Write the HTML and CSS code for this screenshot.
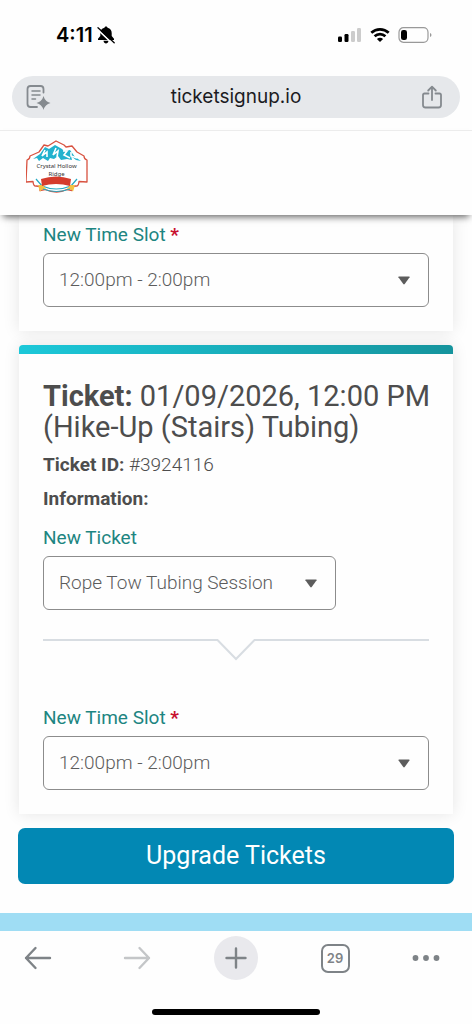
FILE: index.html
```html
<!DOCTYPE html>
<html lang="en">
<head>
<meta charset="utf-8">
<meta name="viewport" content="width=device-width, initial-scale=1">
<title>Upgrade Tickets</title>
<link rel="stylesheet" href="styles.css">
</head>
<body>
<div class="status-bar">
  <div class="status-left">
    <span class="clock">4:11</span>
    <svg width="18" height="18" viewBox="0 0 18 18" aria-hidden="true">
      <path d="M9 .5c-1 0-1.500.6-1.500 1.300C4.500 2.500 3.300 4.500 3.300 7v3L1 12.700v1.300h16v-1.300L14.700 10V7c0-2.500-1.200-4.500-4.200-5.200C10.500 1.100 10 .5 9 .5zM6.500 14.700h5C11.300 16.400 10.200 17.500 9 17.500s-2.300-1.100-2.500-2.800z" fill="#000"/>
      <path d="M0 2.900 15.700 17.900" stroke="#fff" stroke-width="1.500"/>
      <path d="M1 1.700 17.200 16.800" stroke="#000" stroke-width="1.300" stroke-linecap="round"/>
    </svg>
  </div>
  <div class="status-right">
    <svg width="25" height="16" viewBox="0 0 25 16" aria-hidden="true">
      <rect x="1" y="9.500" width="4" height="5.500" rx="1.200"/><rect x="7.500" y="7" width="4" height="8" rx="1.200"/>
      <g fill="#ccc"><rect x="14" y="4" width="4" height="11" rx="1.200"/><rect x="20" y="1" width="4" height="14" rx="1.200"/></g>
    </svg>
    <svg width="20" height="16" viewBox="0 0 20 16" aria-hidden="true">
      <g fill="none" stroke="#000" stroke-width="2.700"><path d="M1.300 5.800C6.200 1.200 13.800 1.200 18.700 5.800"/><path d="M4.600 9.300c3.100-2.900 7.700-2.900 10.800 0"/></g>
      <path d="M10 15 6.900 12c1.700-1.600 4.500-1.600 6.200 0z"/>
    </svg>
    <svg width="34" height="16" viewBox="0 0 34 16" aria-hidden="true">
      <rect x="1" y=".7" width="29" height="14.600" rx="4.500" fill="none" stroke="#999" stroke-width="1.200"/>
      <rect x="3" y="3" width="6" height="10" rx="2.300"/><path d="M32 6v4q1.500-.5 1.500-2T32 6z" fill="#999"/>
    </svg>
  </div>
</div>
<div class="address-bar">
  <button class="icon-button" type="button" aria-label="Page tools">
    <svg width="26" height="26" viewBox="0 0 26 26" fill="none" stroke="#858a8f" stroke-width="1.800" stroke-linecap="round" stroke-linejoin="round">
      <path d="M12 23H5.500Q2.500 23 2.500 20V5Q2.500 2 5.500 2h10q3 0 3 3v3.500"/><path d="M7 7h8M7 11h8M7 15h3.500" stroke-width="1.500"/>
      <path d="M18.500 12q1.500 5.500 7 7-5.500 1.500-7 7-1.500-5.500-7-7 5.500-1.500 7-7z" fill="#858a8f" stroke="none"/>
    </svg>
  </button>
  <span class="address">ticketsignup.io</span>
  <button class="icon-button" type="button" aria-label="Share">
    <svg width="22" height="24" viewBox="0 0 22 24" fill="none" stroke="#858a8f" stroke-width="1.800" stroke-linecap="round" stroke-linejoin="round">
      <path d="M7.500 8.500h-4q-1.500 0-1.500 1.500V20q0 2.500 2.500 2.500h13Q20 22.500 20 20V10q0-1.500-1.500-1.500h-4M11 15V2M7.200 5.500 11 1.700l3.800 3.800"/>
    </svg>
  </button>
</div>
<header class="site-header">
  <svg class="logo" width="62" height="56" viewBox="0 0 62 56" role="img" aria-label="Crystal Hollow Ridge">
    <path d="M1 20q3-1 3-4l9-4 5-7 4 1 8-5 8 4 2 2 6-1 5 6 7 4q0 3 3 4v22l-8-.500q-.500 5-3 4.500l-4 .500v4l-5-1q-10 5-22 0l-5 1v-4l-4-.500q-2.500.500-3-4.500l-7 .500z" fill="#fff" stroke="#d85240" stroke-width="1.300" stroke-linejoin="round"/>
    <path d="m7 19 7-5 5-7 4 2 6-4 7 4 2 2 6-1 5 7 6 4-5-1-5-4 1 4-5-1-6 1-3-4-4 3-4-1-2 3-5-3-4 3-2-3z" fill="#23b2ce"/>
    <path d="m19 10-3 6 5-4 0 5M30 8l-3 7 5-4-1 6M37 11l4 0-3 4 6 3M45 12l0 4 6 2" fill="none" stroke="#fff" stroke-width="1.600"/>
    <text x="30.500" y="28" text-anchor="middle" class="logo-text">Crystal Hollow</text>
    <text x="30.500" y="36" text-anchor="middle" class="logo-text">Ridge</text>
    <path d="m10 39 6 7q14 6 29 0l6-7" fill="none" stroke="#23a8c2" stroke-width="1.200"/>
    <path d="m12 45 5 0 3 4-4 .500-2 2-1-3zM49 45l-5 0-3 4 4 .500 2 2 1-3z" fill="#f3c344"/>
    <path d="M15 39q15-5 30 0l-1 7q-14-4-28 0z" fill="#d53c2d"/>
    <path d="M17 49q13 5 27 0" fill="none" stroke="#23a8c2" stroke-width="1"/>
  </svg>
</header>
<main class="page">
  <section class="card card-continued">
    <label class="field-label" for="slot-1">New Time Slot <span class="required">*</span></label>
    <div class="select-wrap">
      <select id="slot-1"><option>12:00pm - 2:00pm</option></select>
      <svg class="caret" width="12" height="9" viewBox="0 0 12 9" aria-hidden="true"><path d="M1 .5h10q1 0 .6.800L6.700 8q-.7.800-1.400 0L.4 1.300Q0 .5 1 .5z"/></svg>
    </div>
  </section>
  <section class="card card-ticket">
    <h2 class="ticket-title"><strong>Ticket:</strong> 01/09/2026, 12:00 PM (Hike-Up (Stairs) Tubing)</h2>
    <p class="detail"><strong>Ticket ID:</strong> #3924116</p>
    <p class="detail"><strong>Information:</strong></p>
    <label class="field-label" for="new-ticket">New Ticket</label>
    <div class="select-wrap select-short">
      <select id="new-ticket"><option>Rope Tow Tubing Session</option></select>
      <svg class="caret" width="12" height="9" viewBox="0 0 12 9" aria-hidden="true"><path d="M1 .5h10q1 0 .6.800L6.700 8q-.7.800-1.400 0L.4 1.300Q0 .5 1 .5z"/></svg>
    </div>
    <div class="divider">
      <svg width="40" height="22" viewBox="0 0 40 22" fill="none" stroke="#d8dde2" stroke-width="2" aria-hidden="true"><path d="M0 1h1.500L20 20 38.500 1H40"/></svg>
    </div>
    <label class="field-label" for="slot-2">New Time Slot <span class="required">*</span></label>
    <div class="select-wrap">
      <select id="slot-2"><option>12:00pm - 2:00pm</option></select>
      <svg class="caret" width="12" height="9" viewBox="0 0 12 9" aria-hidden="true"><path d="M1 .5h10q1 0 .6.800L6.700 8q-.7.800-1.400 0L.4 1.300Q0 .5 1 .5z"/></svg>
    </div>
  </section>
  <button class="submit" type="button">Upgrade Tickets</button>
</main>
<div class="footer-strip"></div>
<nav class="toolbar" aria-label="Browser">
  <button class="icon-button" type="button" aria-label="Back"><svg width="28" height="24" viewBox="0 0 28 24" fill="none" stroke="#7e8387" stroke-width="2.400" stroke-linecap="round" stroke-linejoin="round"><path d="M26 12H2M11.500 2 2 12l9.500 10"/></svg></button>
  <button class="icon-button" type="button" aria-label="Forward"><svg width="28" height="24" viewBox="0 0 28 24" fill="none" stroke="#c4c6c8" stroke-width="2.400" stroke-linecap="round" stroke-linejoin="round"><path d="M2 12h24M16.500 2 26 12l-9.500 10"/></svg></button>
  <button class="icon-button new-tab" type="button" aria-label="New tab"><svg width="22" height="22" viewBox="0 0 22 22" fill="none" stroke="#7e8387" stroke-width="2.400" stroke-linecap="round"><path d="M11 1.500v19M1.500 11h19"/></svg></button>
  <button class="icon-button" type="button" aria-label="Tabs"><span class="tab-count">29</span></button>
  <button class="icon-button more" type="button" aria-label="More"><svg width="28" height="8" viewBox="0 0 28 8" fill="#7e8387"><circle cx="3.500" cy="4" r="2.900"/><circle cx="14" cy="4" r="2.900"/><circle cx="24.500" cy="4" r="2.900"/></svg></button>
</nav>
<div class="home-indicator"></div>
</body>
</html>
```
FILE: styles.css
```css
* { box-sizing: border-box; }

body {
  margin: 0;
  min-height: 100vh;
  display: flex;
  flex-direction: column;
  background: #fefefe;
  color: #4d4d4d;
  font-family: Roboto, sans-serif;
  font-size: 19px;
  line-height: 24px;
}

button, select { font: inherit; }

.status-bar {
  display: flex;
  justify-content: space-between;
  align-items: center;
  height: 76px;
  padding: 0 40px 6px 56px;
}

.status-left, .status-right { display: flex; align-items: center; }
.status-left { gap: 4px; }
.status-right { gap: 8px; }

.clock {
  color: #000;
  font-family: Inter, sans-serif;
  font-size: 20px;
  font-weight: 600;
}

.address-bar {
  display: flex;
  align-items: center;
  justify-content: space-between;
  height: 42px;
  margin: 0 12px 12px;
  padding: 0 17px 0 13px;
  border-radius: 21px;
  background: #e6e8eb;
}

.address {
  color: #1b1b1f;
  font-family: Inter, sans-serif;
  font-size: 19px;
}

.icon-button {
  display: flex;
  align-items: center;
  justify-content: center;
  padding: 0;
  border: 0;
  background: none;
}

.site-header {
  position: relative;
  z-index: 1;
  padding: 9px 26px 19px;
  border-top: 1px solid #ececec;
  background: #fefefe;
  box-shadow: 0 5px 7px -3px rgba(0, 0, 0, 0.6);
}

.logo { display: block; }

.logo-text {
  fill: #333;
  font-family: "Noto Sans", sans-serif;
  font-size: 6px;
}

.page {
  flex: 1;
  display: flex;
  flex-direction: column;
  gap: 14px;
  padding: 0 18px 29px;
}

.card {
  margin: 0 1px;
  padding: 24px;
  background: #fefefe;
  box-shadow: 0 0 16px rgba(0, 0, 0, 0.1);
}

.card-continued { padding-top: 8px; }

.card-ticket {
  border-radius: 4px 4px 0 0;
  background: linear-gradient(90deg, #1cc8d9, #15949d) top / 100% 9px no-repeat #fefefe;
  padding-top: 36px;
}

.ticket-title {
  margin: 0 -8px 10px 0;
  font-size: 29px;
  font-weight: 400;
  line-height: 31px;
}

.ticket-title strong, .detail strong { font-weight: 700; }

.detail {
  margin: 0 0 10px;
  font-weight: 300;
}

.field-label {
  display: block;
  margin-bottom: 6px;
  color: #1d8581;
}

.detail + .field-label { margin-top: 15px; }

.required { color: #c8102e; font-weight: 700; }

.select-wrap {
  display: grid;
  align-items: center;
}

.select-wrap > * { grid-area: 1 / 1; }

.select-short { width: 76%; }

select {
  appearance: none;
  width: 100%;
  height: 54px;
  padding: 0 40px 0 15px;
  border: 1px solid #8c8c8c;
  border-radius: 6px;
  background: #fefefe;
  color: #5c5c5c;
  font-weight: 300;
}

.caret {
  justify-self: end;
  margin-right: 19px;
  fill: #5c5c5c;
  pointer-events: none;
}

.divider {
  display: flex;
  margin: 29px 0 45px;
}

.divider::before, .divider::after {
  content: "";
  flex: 1;
  height: 2px;
  background: #d8dde2;
}

.submit {
  height: 56px;
  border: 0;
  border-radius: 7px;
  background: #0288b4;
  color: #fff;
  font-size: 25px;
}

.footer-strip { height: 18px; background: #9fddf4; }

.toolbar {
  display: flex;
  align-items: center;
  justify-content: space-between;
  height: 54px;
  padding: 0 16px;
}

.toolbar .icon-button { width: 44px; height: 44px; }

.toolbar .more { justify-content: flex-start; }

.new-tab {
  border-radius: 50%;
  background: #e9e9ed;
}

.tab-count {
  width: 29px;
  height: 29px;
  border: 2px solid #7e8387;
  border-radius: 7px;
  color: #7e8387;
  font-family: Inter, sans-serif;
  font-size: 13px;
  font-weight: 600;
  line-height: 25px;
  text-align: center;
}

.home-indicator {
  width: 168px;
  height: 6px;
  margin: 24px auto 10px;
  border-radius: 3px;
  background: #000;
}
```
